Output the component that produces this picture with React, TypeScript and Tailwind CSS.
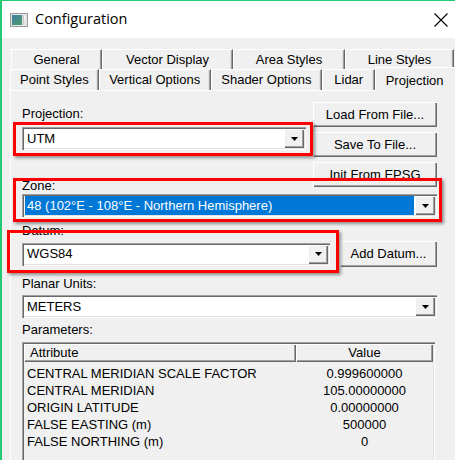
import React from "react";

const raised =
  "bg-[#f0f0f0] shadow-[inset_1px_1px_0_#ffffff,inset_-1px_-1px_0_#696969,inset_-2px_-2px_0_#a0a0a0]";
const sunken =
  "shadow-[inset_1px_1px_0_#a0a0a0,inset_2px_2px_0_#696969,inset_-1px_-1px_0_#ffffff,inset_-2px_-2px_0_#e3e3e3]";

function Arrow() {
  return (
    <svg width="7" height="4" viewBox="0 0 7 4">
      <path d="M0 0 H7 L3.5 4 Z" fill="#000" />
    </svg>
  );
}

function Combo({
  value,
  className,
  selected,
}: {
  value: string;
  className: string;
  selected?: boolean;
}) {
  return (
    <div className={`flex h-[23px] items-stretch bg-white p-[2px] ${sunken} ${className}`}>
      <div className="flex flex-1 items-center px-[1px]">
        <div
          className={`flex h-full flex-1 items-center pl-[2px] ${
            selected ? "bg-[#0078d7] text-white" : "text-black"
          }`}
        >
          {value}
        </div>
      </div>
      <div className={`flex w-[20px] items-center justify-center ${raised}`}>
        <Arrow />
      </div>
    </div>
  );
}

function Button({ label, className }: { label: string; className: string }) {
  return (
    <div className={`flex items-center justify-center ${raised} ${className}`}>
      {label}
    </div>
  );
}

function Tab({ label, w }: { label: string; w: string }) {
  return (
    <div
      className={`flex h-full items-center justify-center border-l border-t border-white bg-[#f0f0f0] shadow-[inset_-1px_0_0_#a0a0a0,inset_-2px_0_0_#e3e3e3] border-r border-r-[#696969] ${w}`}
    >
      {label}
    </div>
  );
}

const rows: [string, string][] = [
  ["CENTRAL MERIDIAN SCALE FACTOR", "0.999600000"],
  ["CENTRAL MERIDIAN", "105.00000000"],
  ["ORIGIN LATITUDE", "0.00000000"],
  ["FALSE EASTING (m)", "500000"],
  ["FALSE NORTHING (m)", "0"],
];

export default function App() {
  return (
    <div className="relative flex h-[460px] w-[455px] flex-col overflow-hidden border-l-2 border-t border-[#22c872] bg-[#f0f0f0] font-['Liberation_Sans',Arial,sans-serif] text-[13px] text-black">
      {/* Title bar */}
      <div className="flex h-[37px] shrink-0 items-center bg-white pl-[8px]">
        <svg width="18" height="14" viewBox="0 0 18 14">
          <defs>
            <linearGradient id="g" x1="0" y1="0" x2="1" y2="1">
              <stop offset="0" stopColor="#3d7fa0" />
              <stop offset="1" stopColor="#4f9c70" />
            </linearGradient>
          </defs>
          <rect x="0.5" y="0.5" width="17" height="13" fill="#e6e6e6" stroke="#9a9a9a" />
          <rect x="2" y="2" width="10" height="10" fill="url(#g)" />
          <rect x="14" y="3" width="1" height="3" fill="#ffffff" />
          <rect x="13" y="2" width="1" height="10" fill="#c8c8c8" />
        </svg>
        <span className="ml-[7px] font-['Open_Sans',sans-serif] text-[14.5px] leading-none text-black">
          Configuration
        </span>
        <div className="flex-1" />
        <svg width="14" height="14" viewBox="0 0 14 14" className="mr-[7px]">
          <path d="M0.5 0.5 L13.5 13.5 M13.5 0.5 L0.5 13.5" stroke="#000" strokeWidth="1.1" />
        </svg>
      </div>

      {/* Body */}
      <div className="flex flex-1 flex-col pl-[8px] pt-[11px]">
        {/* Tab row 1 */}
        <div className="ml-[1px] flex h-[20px] shrink-0">
          <Tab label="General" w="w-[91px]" />
          <Tab label="Vector Display" w="w-[131px]" />
          <Tab label="Area Styles" w="w-[112px]" />
          <Tab label="Line Styles" w="w-[109px]" />
        </div>
        {/* Tab row 2 */}
        <div className="relative z-10 flex h-[21px] shrink-0 items-end">
          <Tab label="Point Styles" w="w-[89px]" />
          <Tab label="Vertical Options" w="w-[112px]" />
          <Tab label="Shader Options" w="w-[112px]" />
          <Tab label="Lidar" w="w-[53px]" />
          <div className="-mb-[1px] flex h-[24px] w-[80px] items-start justify-center border-l border-t border-white bg-[#f0f0f0] pt-[3px] pr-[2px]">
            Projection
          </div>
        </div>

        {/* Panel */}
        <div className="flex w-[444px] flex-1 flex-col border-l border-t border-white pl-[11px]">
          <div className="flex items-start">
            <div className="flex w-[284px] flex-col pt-[15px]">
              <div className="h-[15px] leading-[15px]">Projection:</div>
              <Combo value="UTM" className="mt-[6px] w-[284px]" />
              <div className="mt-[28px] h-[15px] leading-[15px]">Zone:</div>
            </div>
            <div className="ml-[7px] flex w-[124px] flex-col gap-[5px] pt-[11px]">
              <Button label="Load From File..." className="h-[25px]" />
              <Button label="Save To File..." className="h-[25px]" />
              <Button label="Init From EPSG" className="h-[25px]" />
            </div>
          </div>
          <Combo
            value="48 (102°E - 108°E - Northern Hemisphere)"
            className="mt-[1px] w-[415px]"
            selected
          />
          <div className="mt-[6px] h-[15px] leading-[15px]">Datum:</div>
          <div className="mt-[3px] flex h-[26px] items-center">
            <Combo value="WGS84" className="w-[308px]" />
            <Button label="Add Datum..." className="ml-[10px] h-[26px] w-[97px]" />
          </div>
          <div className="mt-[9px] h-[15px] leading-[15px]">Planar Units:</div>
          <Combo value="METERS" className="mt-[4px] w-[415px]" />
          <div className="mt-[4px] h-[15px] leading-[15px]">Parameters:</div>

          {/* Table */}
          <div className={`mt-[5px] flex h-[140px] w-[413px] flex-col p-[2px] ${sunken}`}>
            <div className="flex h-[18px] shrink-0">
              <div className={`flex w-[272px] items-center pl-[6px] ${raised}`}>Attribute</div>
              <div className={`flex w-[137px] items-center justify-center ${raised}`}>Value</div>
            </div>
            <div className="flex flex-col pt-[3px]">
              {rows.map(([a, v]) => (
                <div key={a} className="flex h-[17px] items-center leading-[17px]">
                  <div className="w-[272px] pl-[3px]">{a}</div>
                  <div className="w-[137px] text-center">{v}</div>
                </div>
              ))}
            </div>
          </div>
        </div>
      </div>

      {/* Red annotation boxes */}
      <div className="pointer-events-none absolute left-[11px] top-[121px] h-[34px] w-[300px] border-[3px] border-[#ff0000] shadow-[2px_2px_3px_rgba(0,0,0,0.4)]" />
      <div className="pointer-events-none absolute left-[11px] top-[177px] h-[44px] w-[429px] border-[3px] border-[#ff0000] shadow-[2px_2px_3px_rgba(0,0,0,0.4)]" />
      <div className="pointer-events-none absolute left-[5px] top-[229px] h-[43px] w-[332px] border-[3px] border-[#ff0000] shadow-[2px_2px_3px_rgba(0,0,0,0.4)]" />
    </div>
  );
}
